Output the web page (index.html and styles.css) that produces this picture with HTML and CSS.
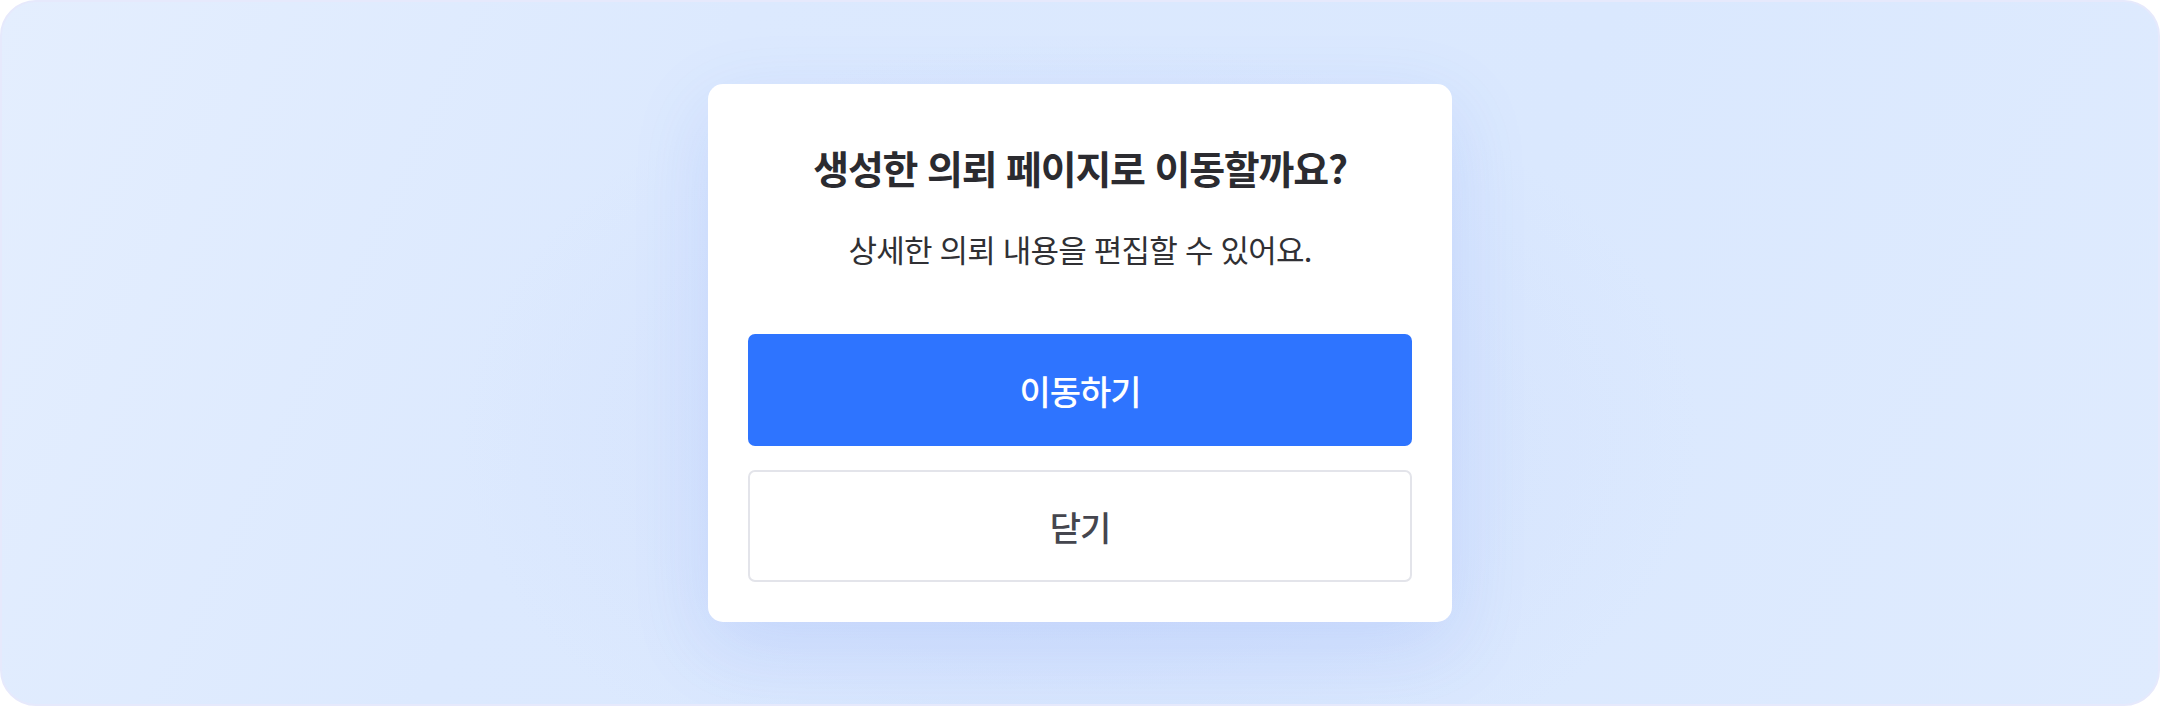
FILE: index.html
```html
<!DOCTYPE html>
<html lang="ko">
<head>
<meta charset="utf-8">
<title>이동 확인</title>
<link rel="stylesheet" href="styles.css">
</head>
<body>
<div class="frame">
  <div class="dialog" role="dialog" aria-modal="true">
    <h2 class="dialog-title">생성한 의뢰 페이지로 이동할까요?</h2>
    <p class="dialog-desc">상세한 의뢰 내용을 편집할 수 있어요.</p>
    <div class="dialog-actions">
      <button class="btn btn-primary" type="button">이동하기</button>
      <button class="btn btn-secondary" type="button">닫기</button>
    </div>
  </div>
</div>
</body>
</html>
```

FILE: styles.css
```css
* { box-sizing: border-box; }
html, body { margin: 0; padding: 0; background: #ffffff; }
body {
  width: 2160px;
  height: 706px;
  font-family: "Noto Sans CJK KR", "Noto Sans", sans-serif;
}
.frame {
  width: 2160px;
  height: 706px;
  border-radius: 36px;
  border: 2px solid #e6e9fc;
  background:
    radial-gradient(ellipse 620px 400px at 50% 62%, rgba(208, 222, 252, 0.85), rgba(208, 222, 252, 0) 100%),
    linear-gradient(115deg, #e4eefe 0%, #dce9fe 30%, #dae8fe 65%, #dfebfe 100%);
  display: flex;
  align-items: center;
  justify-content: center;
  overflow: hidden;
}
.dialog {
  width: 744px;
  height: 538px;
  background: #ffffff;
  border-radius: 15px;
  padding: 59px 40px 40px;
  box-shadow: 0 24px 80px rgba(70, 110, 240, 0.14);
  display: flex;
  flex-direction: column;
  align-items: center;
}
.dialog-title {
  margin: 0;
  font-size: 39px;
  line-height: 48px;
  font-weight: 700;
  color: #2b2b30;
  letter-spacing: -1.2px;
  text-align: center;
  white-space: nowrap;
}
.dialog-desc {
  margin: 38px 0 0;
  font-size: 31px;
  line-height: 40px;
  font-weight: 400;
  color: #303034;
  letter-spacing: -0.8px;
  text-align: center;
  white-space: nowrap;
}
.dialog-actions {
  margin-top: auto;
  width: 100%;
  display: flex;
  flex-direction: column;
  gap: 24px;
}
.btn {
  width: 100%;
  height: 112px;
  border-radius: 7px;
  font-family: inherit;
  font-size: 34px;
  font-weight: 500;
  letter-spacing: -1px;
  cursor: pointer;
}
.btn-primary {
  background: #2e74ff;
  border: none;
  color: #ffffff;
}
.btn-secondary {
  background: #ffffff;
  border: 2px solid #e3e4ea;
  color: #45464e;
}
```
